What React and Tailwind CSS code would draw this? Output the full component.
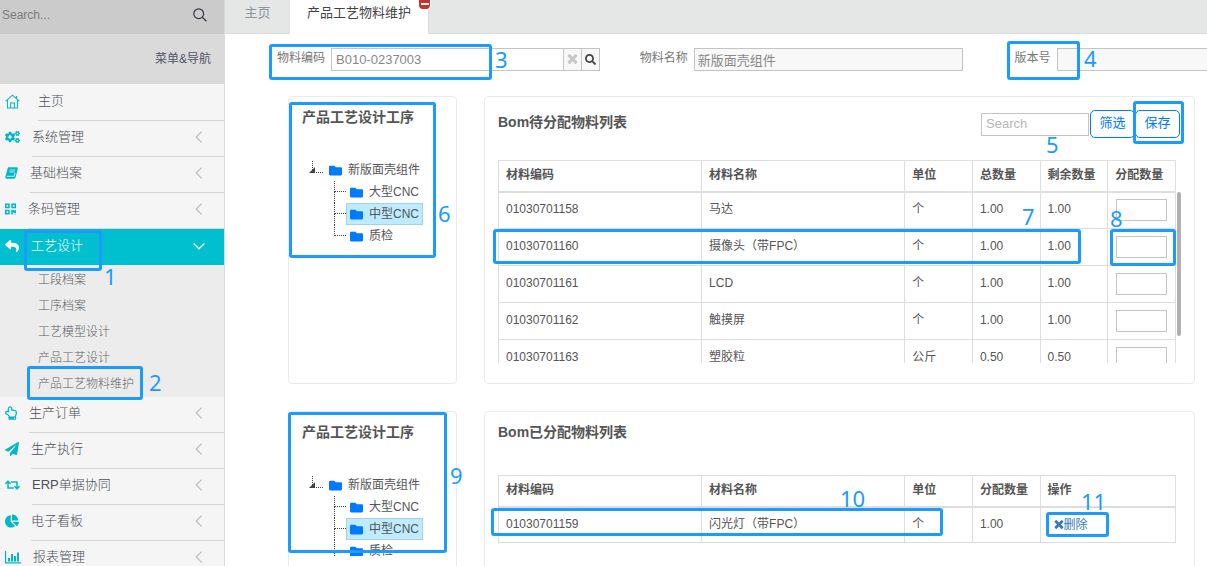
import React from "react";
import { FaCogs, FaQrcode, FaReply, FaRegHandPointUp, FaPaperPlane, FaRetweet, FaChartPie, FaFolder, FaSearch } from "react-icons/fa";

const HomeIcon = ({ className }) => (
  <svg viewBox="0 0 16 16" className={className} fill="none" stroke="currentColor" strokeWidth="1.1">
    <path d="M0.8 7.6 8 1.2l7.200 6.400M2.600 6.200V15h10.800V6.200M6 15V9.500h4V15M12.300 4.800V2.200" />
  </svg>
);

const BookIcon = ({ className }) => (
  <svg viewBox="0 0 13 12" className={className}>
    <path d="M4 .3h7.800c.8 0 1.200.6 1 1.300l-2.300 8.900c-.2.700-.8 1.200-1.600 1.200H1.800C.8 11.700.1 11 .3 10L2.600 1.500C2.800.8 3.300.3 4 .3z" fill="currentColor" />
    <path d="M4.800 3h5.400M4.300 5h5.400M1.700 9.300h7.500l.9-3.500" stroke="#f5f5f5" strokeWidth=".8" fill="none" />
  </svg>
);

const BarsIcon = ({ className }) => (
  <svg viewBox="0 0 16 14" className={className} fill="currentColor">
    <path d="M0 1h1.200v11.300H16v1.200H0zM3 8h2v3.500H3zM6 4h2v7.500H6zM9 6h2v5.500H9zM12 2.500h2v9h-2z" />
  </svg>
);

const CrossIcon = ({ className }) => (
  <svg viewBox="40 240 1328 1330" className={className} fill="currentColor">
    <path d="M1298 1202q0 40-28 68l-136 136q-28 28-68 28t-68-28l-294-294-294 294q-28 28-68 28t-68-28l-136-136q-28-28-28-68t28-68l294-294-294-294q-28-28-28-68t28-68l136-136q28-28 68-28t68 28l294 294 294-294q28-28 68-28t68 28l136 136q28 28 28 68t-28 68l-294 294 294 294q28 28 28 68z" />
  </svg>
);

const ThinSearch = ({ className }) => (
  <svg viewBox="0 0 14 14" className={className} fill="none" stroke="currentColor" strokeWidth="1.200">
    <circle cx="5.700" cy="5.700" r="4.900" />
    <path d="m9.300 9.300 4.200 3.900" />
  </svg>
);

const Chevron = ({ open }) => (
  <svg viewBox="0 0 12 12" className={open ? "size-3 text-white" : "size-3 text-[#b9bdc0]"} fill="none" stroke="currentColor" strokeWidth="1.200">
    <path d={open ? "M.6 3.500 6 8.800l5.400-5.300" : "M8.600.6 3.200 6l5.400 5.400"} />
  </svg>
);

const topMenu = [
  { label: "系统管理", Icon: FaCogs, size: "w-[15px]" },
  { label: "基础档案", Icon: BookIcon, size: "w-[13px]" },
  { label: "条码管理", Icon: FaQrcode, size: "w-[11px]" },
];
const subMenu = ["工段档案", "工序档案", "工艺模型设计", "产品工艺设计", "产品工艺物料维护"];
const bottomMenu = [
  { label: "生产订单", Icon: FaRegHandPointUp, size: "w-3" },
  { label: "生产执行", Icon: FaPaperPlane, size: "w-3.5" },
  { label: "ERP单据协同", Icon: FaRetweet, size: "w-[15px]" },
  { label: "电子看板", Icon: FaChartPie, size: "w-3.5" },
  { label: "报表管理", Icon: BarsIcon, size: "w-4" },
];

function MenuItem({ label, Icon, size }) {
  return (
    <li>
      <a href="#" className="flex h-9 pl-[5px] text-[13px] text-[#4b5058]">
        <span className={`${size} mr-3 flex shrink-0 items-center pb-1 text-[#00b7c9]`}>
          <Icon className="h-3.5 w-full" />
        </span>
        <span className="flex flex-1 items-center justify-between border-b border-[#d6d6d6] pr-[19px] pb-[3px]">
          {label}
          <Chevron />
        </span>
      </a>
    </li>
  );
}

function Sidebar() {
  return (
    <aside className="w-[225px] shrink-0 border-r border-[#d9d9d9] bg-[#f5f5f5] font-light">
      <div className="flex h-[34px] items-center bg-[#cbcbcb] pr-[17px] pb-1 pl-0.5">
        <input type="search" aria-label="Search menu" placeholder="Search..." className="min-w-0 flex-1 bg-transparent text-xs outline-none placeholder:text-[#7b7b7b]" />
        <button aria-label="Search"><ThinSearch className="size-3.5 text-[#333a44]" /></button>
      </div>
      <div className="flex h-[50px] items-center justify-end bg-[#dadada] pr-[13px] text-xs font-normal text-[#4f5668]">菜单&amp;导航</div>
      <nav>
        <ul>
          <li>
            <a href="#" className="flex h-[37px] pl-[5px] text-[13px] text-[#4b5058]">
              <span className="mr-[18px] flex w-[15px] items-center pb-0.5 text-[#00b7c9]"><HomeIcon className="size-full" /></span>
              <span className="flex flex-1 items-center border-b border-[#d6d6d6] pb-0.5">主页</span>
            </a>
          </li>
          {topMenu.map((m) => <MenuItem key={m.label} {...m} />)}
          <li>
            <a href="#" className="flex h-9 items-center bg-[#00bfcf] pr-[19px] pb-[3px] pl-[5px] text-[13px] text-white">
              <FaReply className="mr-3 size-3.5" />
              <span className="flex-1">工艺设计</span>
              <Chevron open />
            </a>
            <ul className="bg-[#ececec] pt-0.5 text-xs text-[#5b5f65]">
              {subMenu.map((s) => (
                <li key={s}><a href="#" className="flex h-[26px] items-center pl-[38px]">{s}</a></li>
              ))}
            </ul>
          </li>
          {bottomMenu.map((m) => <MenuItem key={m.label} {...m} />)}
        </ul>
      </nav>
    </aside>
  );
}

function Tabs() {
  return (
    <div className="flex h-[34px] border-b border-[#dcdcdc] bg-[#e5e7e6] text-[13px]">
      <button className="w-[65px] pb-[7px] text-[#8b959d]">主页</button>
      <div className="relative -mb-px flex border-r border-[#dcdcdc] bg-white">
        <button className="px-[17px] pb-2 text-[#444]">产品工艺物料维护</button>
        <button aria-label="关闭" className="absolute -top-0.5 -right-0.5 flex h-[11px] w-[11px] items-center justify-center rounded-b-sm bg-[#c9302c] ring-1 ring-white">
          <span className="h-0.5 w-2 bg-white" />
        </button>
      </div>
    </div>
  );
}

function Field({ id, label, children }) {
  return (
    <div className="flex w-[37.4%] shrink-0">
      <label htmlFor={id} className="mr-1.5 w-[88px] shrink-0 pt-px text-right text-xs leading-[18px] text-[#777]">{label}</label>
      {children}
    </div>
  );
}

function SearchForm() {
  return (
    <form className="flex overflow-hidden pt-3.5 pl-3">
      <Field id="code" label="物料编码">
        <div className="flex h-[23px] min-w-0 flex-1 border border-[#c4c4c4]">
          <input id="code" defaultValue="B010-0237003" className="min-w-0 flex-1 px-1 text-[13px] text-[#888] outline-none" />
          <button type="button" aria-label="清除" className="flex w-[18px] items-center justify-center border-l border-[#c4c4c4] bg-[#f8f8f8]"><CrossIcon className="size-[11px] text-[#c8c8c8]" /></button>
          <button type="button" aria-label="查找" className="flex w-[18px] items-center justify-center border-l border-[#c4c4c4] bg-[#f8f8f8]"><FaSearch className="size-[11px] text-[#444]" /></button>
        </div>
      </Field>
      <Field id="name" label="物料名称">
        <input id="name" readOnly defaultValue="新版面壳组件" className="h-[23px] min-w-0 flex-1 border border-[#c4c4c4] bg-[#f8f8f8] px-[3px] text-[13px] text-[#888]" />
      </Field>
      <Field id="version" label="版本号">
        <input id="version" readOnly className="h-[23px] min-w-0 flex-1 border border-[#c4c4c4] bg-[#f8f8f8]" />
      </Field>
    </form>
  );
}

function TreePanel({ clipped }) {
  const nodes = ["大型CNC", "中型CNC", "质检"];
  return (
    <section className="w-[169px] shrink-0 rounded border border-[#ebebeb] px-[13px] pt-2.5 text-[#555]">
      <h2 className="text-sm leading-5 font-bold whitespace-nowrap">产品工艺设计工序</h2>
      <div className={clipped ? "mt-7 h-[86px] overflow-hidden pl-[7px] text-xs" : "mt-7 pl-[7px] text-xs"}>
        <div className="flex h-[26px] items-center pt-1">
          <svg viewBox="0 0 14 16" className="-mt-1 mr-1 h-4 w-3.5" fill="none">
            <path d="M3.500 1v12M5 12.500h9" stroke="#444" strokeDasharray="1 1" />
            <path d="M6 7v6H0z" fill="#444" />
          </svg>
          <FaFolder className="mr-1.5 ml-0.5 size-[13px] text-[#007bff]" />
          新版面壳组件
        </div>
        <ul className="ml-[25px]">
          {nodes.map((n, i) => (
            <li key={n} className="flex h-[22px] items-stretch">
              <span className="flex w-3 shrink-0 flex-col">
                <span className="h-1/2 border-b border-l border-dotted border-[#444]" />
                {i < 2 || clipped ? <span className="h-1/2 border-l border-dotted border-[#444]" /> : null}
              </span>
              <a href="#" className={i === 1 ? "flex items-center border border-[#abd0e2] bg-[#beebff] px-[3px]" : "flex items-center border border-transparent px-[3px]"}>
                <FaFolder className="mr-1.5 size-[13px] text-[#007bff]" />
                {n}
              </a>
            </li>
          ))}
        </ul>
      </div>
    </section>
  );
}

const th = "h-[31px] border border-b-2 border-[#ddd] px-[7px] pb-0.5 text-left font-bold whitespace-nowrap";
const td = "border border-[#ddd] px-[7px] pb-0.5";

const pending = [
  ["01030701158", "马达", "个", "1.00", "1.00"],
  ["01030701160", "摄像头（带FPC）", "个", "1.00", "1.00"],
  ["01030701161", "LCD", "个", "1.00", "1.00"],
  ["01030701162", "触摸屏", "个", "1.00", "1.00"],
  ["01030701163", "塑胶粒", "公斤", "0.50", "0.50"],
];

function PendingPanel() {
  return (
    <section className="min-w-0 flex-1 rounded border border-[#ebebeb] px-[13px] pt-[13px] pb-5 text-[#555]">
      <header className="flex h-7 items-center pr-px">
        <h2 className="flex-1 pb-1 text-sm leading-5 font-bold">Bom待分配物料列表</h2>
        <input type="text" aria-label="Search" placeholder="Search" className="mr-px h-[23px] w-[108px] border border-[#c4c4c4] px-1 pb-0.5 text-[13px] outline-none placeholder:text-[#b5b5b5]" />
        <button className="h-7 w-[45px] rounded-[5px] border border-[#007bff] pb-0.5 text-[13px] text-[#007bff]">筛选</button>
        <button className="h-7 w-[45px] rounded-[5px] border border-[#007bff] pb-0.5 text-[13px] text-[#007bff]">保存</button>
      </header>
      <div className="relative mt-[22px] pr-[5px]">
        <div className="h-[203px] overflow-hidden">
          <table className="w-full table-fixed border-collapse text-xs">
            <thead>
              <tr>
                <th className={`${th} w-[30%]`}>材料编码</th>
                <th className={`${th} w-[30%]`}>材料名称</th>
                <th className={`${th} w-[10%]`}>单位</th>
                <th className={`${th} w-[10%]`}>总数量</th>
                <th className={`${th} w-[10%]`}>剩余数量</th>
                <th className={`${th} w-[10%]`}>分配数量</th>
              </tr>
            </thead>
            <tbody>
              {pending.map((r) => (
                <tr key={r[0]} className="h-[37px]">
                  {r.map((c, i) => <td key={i} className={td}>{c}</td>)}
                  <td className="border border-[#ddd] px-2">
                    <input aria-label={`分配数量 ${r[0]}`} className="block h-[22px] w-full border border-[#c4c4c4] px-1" />
                  </td>
                </tr>
              ))}
            </tbody>
          </table>
        </div>
        <div className="absolute top-8 right-0 h-36 w-1 rounded-sm bg-[#b0b0b0]" />
      </div>
    </section>
  );
}

function AssignedPanel() {
  return (
    <section className="min-w-0 flex-1 rounded border border-[#ebebeb] px-[13px] pt-2.5 text-[#555]">
      <h2 className="text-sm leading-5 font-bold">Bom已分配物料列表</h2>
      <div className="mt-[33px] pr-[5px]">
        <table className="w-full table-fixed border-collapse text-xs">
          <thead>
            <tr>
              <th className={`${th} w-[30%]`}>材料编码</th>
              <th className={`${th} w-[30%]`}>材料名称</th>
              <th className={`${th} w-[10%]`}>单位</th>
              <th className={`${th} w-[10%]`}>分配数量</th>
              <th className={`${th} w-[20%]`}>操作</th>
            </tr>
          </thead>
          <tbody>
            <tr className="h-9">
              {["01030701159", "闪光灯（带FPC）", "个", "1.00"].map((c) => <td key={c} className={td}>{c}</td>)}
              <td className="border border-[#ddd] px-[13px]">
                <a href="#" className="flex items-center text-[#337ab7]"><CrossIcon className="size-2.5" />删除</a>
              </td>
            </tr>
          </tbody>
        </table>
      </div>
    </section>
  );
}

const marks = [
  ["1", "top-[230px] left-6 h-[41px] w-[78px]", "top-[262px] left-[104px]"],
  ["2", "top-[366px] left-[27px] h-[34px] w-[116px]", "top-[368px] left-[149px]"],
  ["3", "top-11 left-[269px] h-9 w-[223px]", "top-[45px] left-[495px]"],
  ["4", "top-[41px] left-[1007px] h-[39px] w-[73px]", "top-11 left-[1084px]"],
  ["5", "top-[101px] left-[1133px] h-[43px] w-[51px]", "top-[130px] left-[1046px]"],
  ["6", "top-[102px] left-[289px] h-[156px] w-[147px]", "top-[199px] left-[438px]"],
  ["7", "top-[229px] left-[493px] h-[35px] w-[588px]", "top-[202px] left-[1022px]"],
  ["8", "top-[229px] left-[1110px] h-[37px] w-[66px]", "top-[204px] left-[1110px]"],
  ["9", "top-[412px] left-[288px] h-[141px] w-[159px]", "top-[461px] left-[450px]"],
  ["10", "top-[508px] left-[491px] h-7 w-[452px]", "top-[484px] left-[840px]"],
  ["11", "top-[512px] left-[1046px] h-[25px] w-[63px]", "top-[487px] left-[1081px]"],
];

function Annotations() {
  return (
    <div className="pointer-events-none absolute inset-0">
      {marks.map(([n, box, num]) => (
        <React.Fragment key={n}>
          <div className={`absolute rounded-[3px] border-3 border-[#1c9bff] ${box}`} />
          <span className={`absolute font-['Noto_Sans',sans-serif] text-[22px] leading-7 text-[#1c9bff] ${num}`}>{n}</span>
        </React.Fragment>
      ))}
    </div>
  );
}

export default function App() {
  return (
    <div className="relative flex h-screen overflow-hidden bg-white font-['Liberation_Sans','Noto_Sans_CJK_SC',sans-serif]">
      <Sidebar />
      <main className="min-w-0 flex-1">
        <Tabs />
        <SearchForm />
        <div className="mt-[25px] flex gap-[27px] pr-3 pl-[63px]">
          <TreePanel />
          <PendingPanel />
        </div>
        <div className="mt-[27px] flex min-h-[200px] gap-[27px] pr-3 pl-[63px]">
          <TreePanel clipped />
          <AssignedPanel />
        </div>
      </main>
      <Annotations />
    </div>
  );
}
